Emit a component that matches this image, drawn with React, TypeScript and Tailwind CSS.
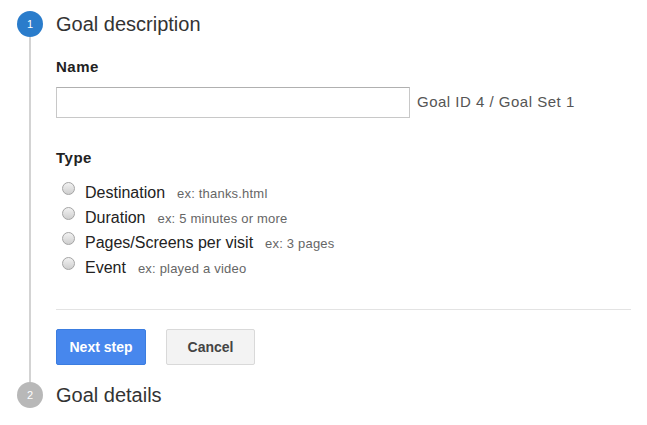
const types = [
  { label: 'Destination', example: 'ex: thanks.html' },
  { label: 'Duration', example: 'ex: 5 minutes or more' },
  { label: 'Pages/Screens per visit', example: 'ex: 3 pages' },
  { label: 'Event', example: 'ex: played a video' },
];

function StepBadge({ n, active }: { n: number; active?: boolean }) {
  return (
    <div
      className={`flex h-[26px] w-[26px] shrink-0 items-center justify-center rounded-full text-[11px] text-white ${
        active ? 'bg-[#2a7ccb]' : 'bg-[#b8b8b8]'
      }`}
    >
      {n}
    </div>
  );
}

function Radio() {
  return (
    <span className="mt-[1px] h-[13px] w-[13px] shrink-0 rounded-full border border-[#a4a4a4] bg-gradient-to-b from-[#f2f2f2] to-[#cfcfcf]" />
  );
}

export default function App() {
  return (
    <div
      className="min-h-[425px] w-[647px] bg-white pl-[17px] pt-[11px] text-[#222]"
      style={{ fontFamily: '"Liberation Sans", Arial, sans-serif' }}
    >
      <div className="flex items-center gap-[13px]">
        <StepBadge n={1} active />
        <h2 className="text-[20px] leading-[26px] text-[#333]">Goal description</h2>
      </div>

      <div className="flex">
        <div className="flex w-[26px] shrink-0 justify-center">
          <div className="w-[2px] bg-[#d3d3d3]" />
        </div>

        <div className="ml-[13px] w-[575px] pb-[17px] pt-[21px]">
          <div className="text-[15px] font-bold leading-[17px] tracking-[0.5px]">Name</div>
          <div className="mt-[12px] flex items-center gap-[7px]">
            <input
              type="text"
              className="h-[31px] w-[354px] border border-[#c8c8c8] border-t-[#b0b0b0] bg-white px-2 text-[14px] outline-none"
            />
            <span className="text-[15px] tracking-[0.5px] text-[#555]">Goal ID 4 / Goal Set 1</span>
          </div>

          <div className="mt-[31px] text-[15px] font-bold leading-[17px] tracking-[0.5px]">Type</div>
          <div className="mt-[15px] flex flex-col">
            {types.map((t) => (
              <label key={t.label} className="flex h-[25px] items-start pl-[6px]">
                <Radio />
                <div className="ml-[10px] mt-[2px] flex items-baseline">
                  <span className="text-[16px] leading-[20px] text-[#222]">{t.label}</span>
                  <span className="ml-[12px] text-[13px] leading-[20px] tracking-[0.2px] text-[#666]">
                    {t.example}
                  </span>
                </div>
              </label>
            ))}
          </div>

          <div className="mt-[28px] h-px bg-[#e3e3e3]" />

          <div className="mt-[19px] flex gap-[20px]">
            <button className="h-[36px] w-[90px] rounded-[2px] border border-[#3b7de0] bg-[#4787ed] text-[14px] font-bold text-white">
              Next step
            </button>
            <button className="h-[36px] w-[89px] rounded-[2px] border border-[#d9d9d9] bg-[#f3f3f3] text-[14px] font-bold text-[#444]">
              Cancel
            </button>
          </div>
        </div>
      </div>

      <div className="flex items-center gap-[13px]">
        <StepBadge n={2} />
        <h2 className="text-[20px] leading-[26px] text-[#333]">Goal details</h2>
      </div>
    </div>
  );
}
